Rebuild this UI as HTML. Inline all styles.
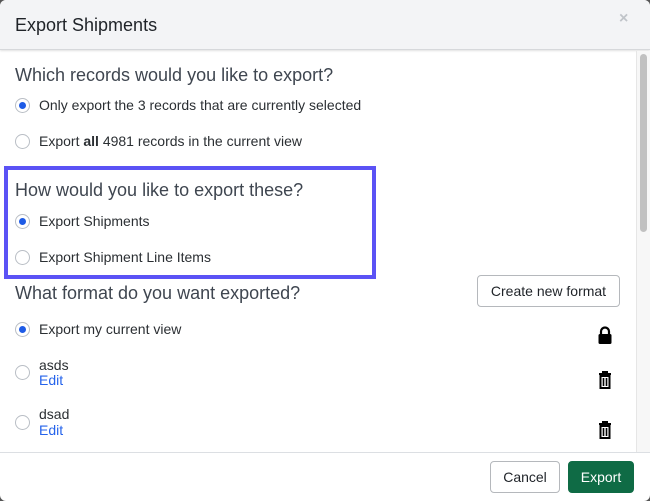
<!DOCTYPE html>
<html><head><style>
*{margin:0;padding:0;box-sizing:border-box}
body{width:650px;height:501px;background:#555;font-family:"Liberation Sans",sans-serif;position:relative;overflow:hidden}
.m{position:absolute;left:0;top:0;width:650px;height:501px;background:#fff;border-radius:6px;overflow:hidden}
.hd{position:absolute;left:0;top:0;width:650px;height:50px;background:#f3f4f6;border-bottom:1px solid #d6d8db;box-shadow:0 1px 2px rgba(0,0,0,.12)}
.a{position:absolute;white-space:nowrap}
.t{font-size:18px;color:#1f2328}
.h{font-size:18px;color:#3f4650}
.l{font-size:14px;color:#2b2f33}
.e{font-size:14px;color:#2563eb}
.r{position:absolute;width:15px;height:15px;border:1px solid #b9bec5;border-radius:50%;background:#fff}
.r.on::after{content:"";position:absolute;left:3px;top:3px;width:7px;height:7px;border-radius:50%;background:#1e5be6}
.btn{position:absolute;border:1px solid #b5b8bc;border-radius:4px;background:#fff;font-size:14px;color:#1f2328;display:flex;align-items:center;justify-content:center}
</style></head><body>
<div class="m">
<div class="hd"></div>
<div class="a t" style="left:15px;top:15px">Export Shipments</div>
<div class="a" style="left:619px;top:10px;font-size:16px;color:#c0c4c9;font-weight:bold">×</div>
<div style="position:absolute;left:636px;top:51px;width:14px;height:401px;background:#f7f7f7;border-left:1px solid #e6e6e6"></div>
<div style="position:absolute;left:640px;top:54px;width:7px;height:178px;background:#c1c1c1;border-radius:4px"></div>

<div class="a h" style="left:15px;top:65px">Which records would you like to export?</div>
<div class="r on" style="left:15px;top:98px"></div>
<div class="a l" style="left:39px;top:97px">Only export the 3 records that are currently selected</div>
<div class="r" style="left:15px;top:134px"></div>
<div class="a l" style="left:39px;top:133px">Export <b>all</b> 4981 records in the current view</div>

<div style="position:absolute;left:4px;top:166px;width:372px;height:113px;border:4px solid #5b52f5"></div>
<div class="a h" style="left:15px;top:180px">How would you like to export these?</div>
<div class="r on" style="left:15px;top:214px"></div>
<div class="a l" style="left:39px;top:213px">Export Shipments</div>
<div class="r" style="left:15px;top:250px"></div>
<div class="a l" style="left:39px;top:249px">Export Shipment Line Items</div>

<div class="a h" style="left:15px;top:283px">What format do you want exported?</div>
<div class="btn" style="left:477px;top:275px;width:143px;height:32px">Create new format</div>

<div class="r on" style="left:15px;top:322px"></div>
<div class="a l" style="left:39px;top:321px">Export my current view</div>
<svg style="position:absolute;left:597px;top:326px" width="16" height="19" viewBox="0 0 16 19"><path d="M4 8V5.5a4 4 0 0 1 8 0V8" fill="none" stroke="#000" stroke-width="2.2"/><rect x="1.5" y="8" width="13" height="10" rx="1.5" fill="#000"/></svg>

<div class="r" style="left:15px;top:365px"></div>
<div class="a l" style="left:39px;top:357px">asds</div>
<div class="a e" style="left:39px;top:372px">Edit</div>
<svg style="position:absolute;left:598px;top:371px" width="14" height="18" viewBox="0 0 14 18"><path d="M1 3h12M5 3V1h4v2" fill="none" stroke="#000" stroke-width="2"/><path d="M2.5 5h9v12h-9z" fill="none" stroke="#000" stroke-width="2"/><path d="M5.5 7v8M8.5 7v8" stroke="#000" stroke-width="1.6"/></svg>

<div class="r" style="left:15px;top:415px"></div>
<div class="a l" style="left:39px;top:406px">dsad</div>
<div class="a e" style="left:39px;top:422px">Edit</div>
<svg style="position:absolute;left:598px;top:421px" width="14" height="18" viewBox="0 0 14 18"><path d="M1 3h12M5 3V1h4v2" fill="none" stroke="#000" stroke-width="2"/><path d="M2.5 5h9v12h-9z" fill="none" stroke="#000" stroke-width="2"/><path d="M5.5 7v8M8.5 7v8" stroke="#000" stroke-width="1.6"/></svg>

<div style="position:absolute;left:0;top:452px;width:650px;height:1px;background:#dcdfe3"></div>
<div class="btn" style="left:490px;top:461px;width:70px;height:32px">Cancel</div>
<div class="btn" style="left:568px;top:461px;width:66px;height:32px;background:#0f6b45;border-color:#0f6b45;color:#fff">Export</div>
</div>
</body></html>
